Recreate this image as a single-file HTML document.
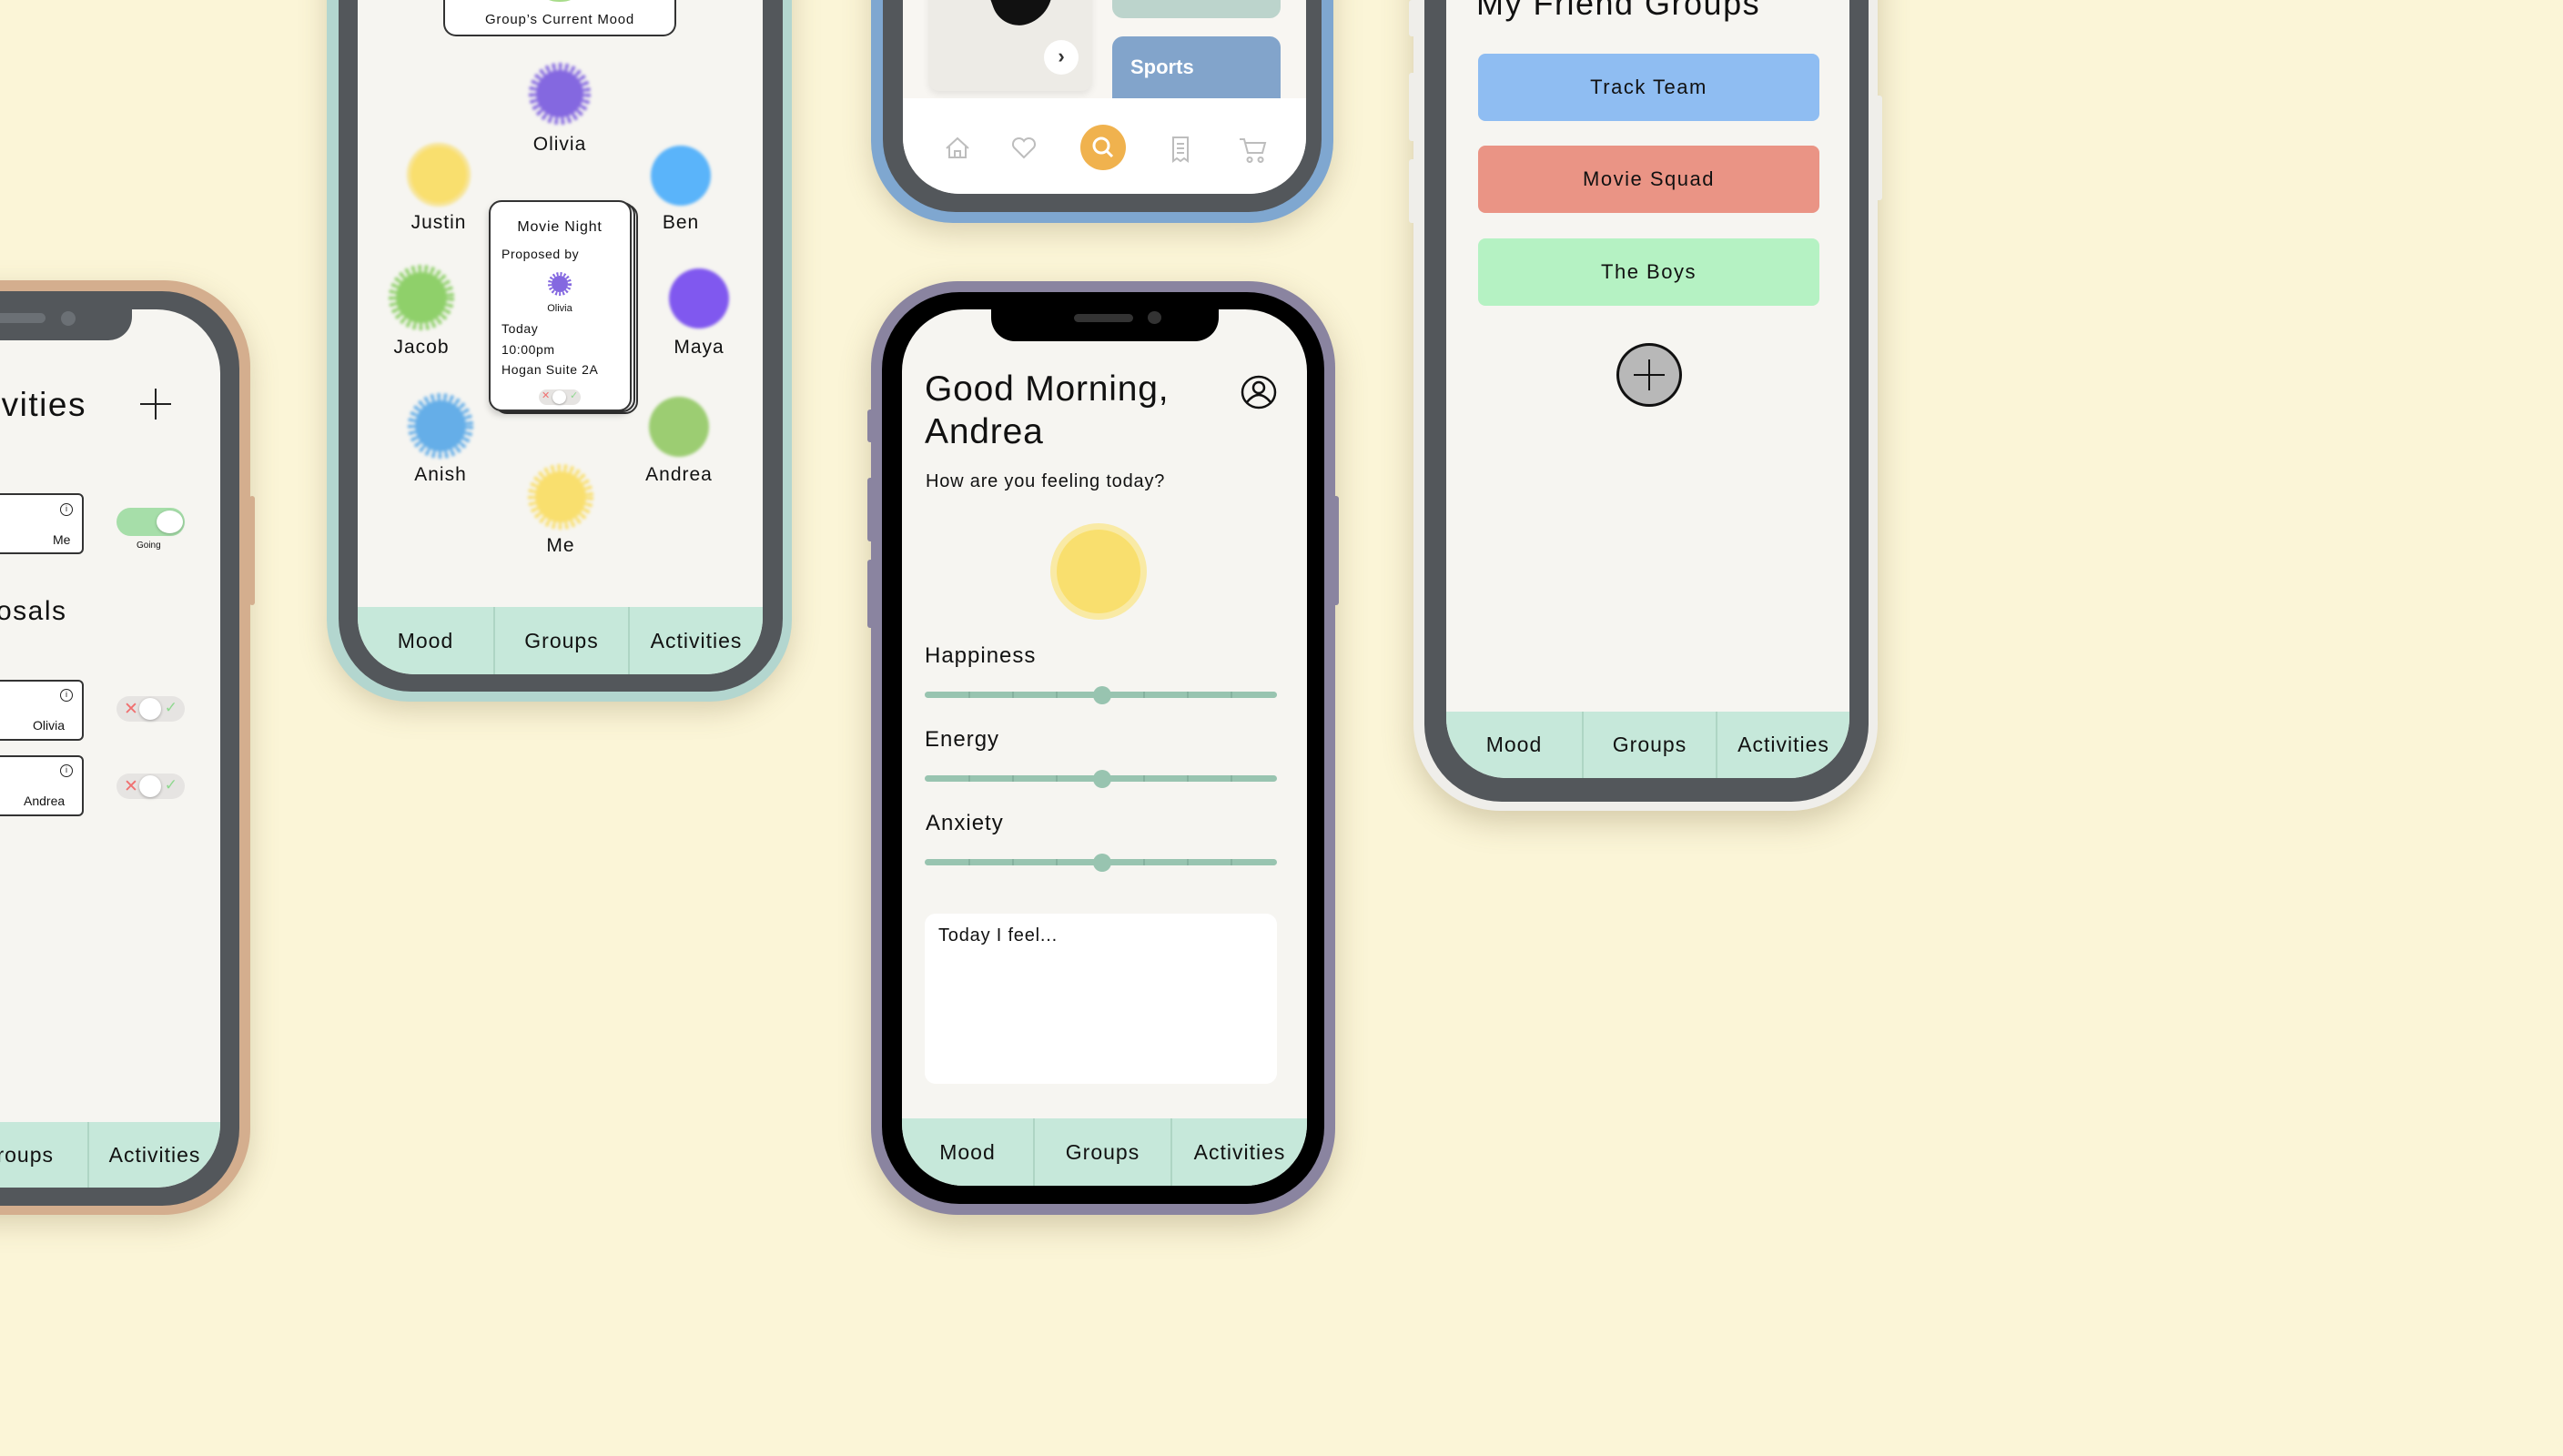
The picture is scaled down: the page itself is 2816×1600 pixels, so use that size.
<!DOCTYPE html>
<html><head><meta charset="utf-8"><style>
*{margin:0;padding:0;box-sizing:border-box}
body{width:2816px;height:1600px;overflow:hidden;background:#fbf5d7;font-family:"Liberation Sans",sans-serif;color:#111;position:relative}
.a{position:absolute}
.t{position:absolute;white-space:nowrap;line-height:1}
.tab{position:absolute;background:#c6e8da;display:flex}
.tab div{flex:1;display:flex;align-items:center;justify-content:center;border-left:2px solid #aed5c4;font-size:23px;letter-spacing:1px}
.tab div:first-child{border-left:none}
.card{position:absolute;background:#fff;border:2px solid #333;border-radius:6px}
.info{position:absolute;width:14px;height:14px;border:1.5px solid #222;border-radius:50%;font-size:9px;text-align:center;line-height:11px}
.tg{position:absolute;width:75px;height:28px;border-radius:14px;background:#e6e4e2}
.tg .k{position:absolute;left:25px;top:2px;width:24px;height:24px;border-radius:50%;background:#fff;box-shadow:0 1px 3px rgba(0,0,0,.3)}
.tg .x{position:absolute;left:8px;top:3px;color:#f07070;font-size:19px}
.tg .v{position:absolute;right:8px;top:3px;color:#8fd88f;font-size:17px}
.lbl{position:absolute;font-size:21px;letter-spacing:1px;transform:translateX(-50%)}
.sl{position:absolute;left:1016px;width:387px;height:7px;border-radius:4px;background:#98c4b0}
.sl i{position:absolute;top:0;width:2px;height:7px;background:#86b29f}
.sl b{position:absolute;left:185px;top:-6px;width:20px;height:20px;border-radius:50%;background:#98c4b0}
.btn{position:absolute;left:1624px;width:375px;height:74px;border-radius:8px;display:flex;align-items:center;justify-content:center;font-size:22px;letter-spacing:1.5px}
</style></head><body>

<!-- Phone 1 left -->
<div class="a" style="left:-300px;top:308px;width:575px;height:1027px;border-radius:95px;background:#d4ae8e;box-shadow:0 10px 30px rgba(120,100,60,.25)"></div>
<div class="a" style="left:274px;top:545px;width:6px;height:120px;background:#d4ae8e;border-radius:3px"></div>
<div class="a" style="left:-300px;top:320px;width:563px;height:1005px;border-radius:85px;background:#53575b"></div>
<div class="a" style="left:-300px;top:340px;width:542px;height:965px;border-radius:70px;background:#f6f5f1;overflow:hidden">
  <div class="a" style="left:0;top:0;width:445px;height:34px;background:#53575b;border-radius:0 0 26px 0"></div>
  <div class="a" style="left:250px;top:4px;width:100px;height:11px;border-radius:6px;background:#6b7075"></div>
  <div class="a" style="left:367px;top:2px;width:16px;height:16px;border-radius:50%;background:#6b7075"></div>
</div>
<div class="t" style="left:-66px;top:426px;font-size:37px;letter-spacing:1.5px">Activities</div>
<div class="a" style="left:154px;top:443px;width:34px;height:2px;background:#222"></div>
<div class="a" style="left:170px;top:427px;width:2px;height:34px;background:#222"></div>
<div class="card" style="left:-20px;top:542px;width:112px;height:67px"></div>
<div class="info" style="left:66px;top:553px">i</div>
<div class="t" style="left:58px;top:586px;font-size:14px">Me</div>
<div class="a" style="left:128px;top:558px;width:75px;height:31px;border-radius:16px;background:#a6dea9"></div>
<div class="a" style="left:172px;top:561px;width:29px;height:25px;border-radius:50%;background:#fff;box-shadow:0 1px 3px rgba(0,0,0,.25)"></div>
<div class="t" style="left:150px;top:595px;font-size:10px">Going</div>
<div class="t" style="left:-4px;top:657px;font-size:30px;letter-spacing:1.5px">osals</div>
<div class="card" style="left:-20px;top:747px;width:112px;height:67px"></div>
<div class="info" style="left:66px;top:757px">i</div>
<div class="t" style="left:36px;top:790px;font-size:14px">Olivia</div>
<div class="card" style="left:-20px;top:830px;width:112px;height:67px"></div>
<div class="info" style="left:66px;top:840px">i</div>
<div class="t" style="left:26px;top:873px;font-size:14px">Andrea</div>
<div class="tg" style="left:128px;top:765px"><span class="x">✕</span><span class="k"></span><span class="v">✓</span></div>
<div class="tg" style="left:128px;top:850px"><span class="x">✕</span><span class="k"></span><span class="v">✓</span></div>
<div class="tab" style="left:-300px;top:1233px;width:542px;height:72px;border-radius:0 0 70px 70px;overflow:hidden">
  <div style="flex:0 0 246px"></div><div style="flex:0 0 150px;justify-content:flex-end;padding-right:37px;border-left:none">Groups</div><div style="flex:0 0 146px">Activities</div>
</div>

<!-- Phone 2 group mood -->
<div class="a" style="left:359px;top:-200px;width:511px;height:971px;border-radius:90px;background:#b3d6cf;box-shadow:0 10px 30px rgba(120,100,60,.25)"></div>
<div class="a" style="left:372px;top:-200px;width:488px;height:960px;border-radius:80px;background:#53575b"></div>
<div class="a" style="left:393px;top:-200px;width:445px;height:941px;border-radius:62px;background:#f6f5f1;overflow:hidden"></div>
<div class="a" style="left:487px;top:-10px;width:256px;height:50px;border:2px solid #333;border-top:none;border-radius:0 0 14px 14px;background:#fff"></div>
<div class="a" style="left:600px;top:-8px;width:30px;height:10px;border-radius:50%;background:#a8dc8a"></div>
<div class="t" style="left:615px;top:14px;font-size:15px;letter-spacing:.8px;transform:translateX(-50%)">Group’s Current Mood</div>
<svg class="a" style="left:360px;top:0" width="500" height="640">
<defs><filter id="bl"><feGaussianBlur stdDeviation="1.5"/></filter></defs>
<g filter="url(#bl)">
<circle cx="255" cy="103" r="26" fill="#8468e0"/><circle cx="255" cy="103" r="30" fill="none" stroke="#8468e0" stroke-width="8" stroke-dasharray="3.5 3.5"/>
<circle cx="122" cy="192" r="33" fill="#f9df6e"/><circle cx="122" cy="192" r="33" fill="none" stroke="#f7e59a" stroke-width="4"/>
<circle cx="388" cy="193" r="33" fill="#5ab4fa"/>
<circle cx="103" cy="327" r="28" fill="#8fd06a"/><circle cx="103" cy="327" r="32" fill="none" stroke="#8fd06a" stroke-width="8" stroke-dasharray="3.5 3.5"/>
<circle cx="408" cy="328" r="33" fill="#8059ef"/>
<circle cx="124" cy="468" r="28" fill="#65aee8"/><circle cx="124" cy="468" r="32" fill="none" stroke="#65aee8" stroke-width="8" stroke-dasharray="3.5 3.5"/>
<circle cx="386" cy="469" r="33" fill="#9ccd72"/>
<circle cx="256" cy="546" r="28" fill="#f9df6e"/><circle cx="256" cy="546" r="32" fill="none" stroke="#f9df6e" stroke-width="8" stroke-dasharray="3.5 3.5"/>
</g></svg>
<div class="lbl" style="left:615px;top:147px">Olivia</div>
<div class="lbl" style="left:482px;top:233px">Justin</div>
<div class="lbl" style="left:748px;top:233px">Ben</div>
<div class="lbl" style="left:463px;top:370px">Jacob</div>
<div class="lbl" style="left:768px;top:370px">Maya</div>
<div class="lbl" style="left:484px;top:510px">Anish</div>
<div class="lbl" style="left:746px;top:510px">Andrea</div>
<div class="lbl" style="left:616px;top:588px">Me</div>
<div class="a" style="left:543px;top:224px;width:158px;height:231px;border:2px solid #333;border-radius:14px;background:#fff"></div>
<div class="a" style="left:540px;top:222px;width:158px;height:231px;border:2px solid #333;border-radius:14px;background:#fff"></div>
<div class="a" style="left:537px;top:220px;width:157px;height:232px;border:2px solid #333;border-radius:14px;background:#fff;box-shadow:0 4px 8px rgba(0,0,0,.2)"></div>
<div class="t" style="left:615px;top:242px;font-size:16px;letter-spacing:.8px;transform:translateX(-50%)">Movie Night</div>
<div class="t" style="left:551px;top:272px;font-size:14px;letter-spacing:.6px">Proposed by</div>
<svg class="a" style="left:601px;top:298px" width="28" height="28"><circle cx="14" cy="14" r="9" fill="#8468e0"/><circle cx="14" cy="14" r="11" fill="none" stroke="#8468e0" stroke-width="4" stroke-dasharray="2 2"/></svg>
<div class="t" style="left:615px;top:334px;font-size:11px;transform:translateX(-50%)">Olivia</div>
<div class="t" style="left:551px;top:354px;font-size:14px;letter-spacing:.6px">Today</div>
<div class="t" style="left:551px;top:377px;font-size:14px;letter-spacing:.6px">10:00pm</div>
<div class="t" style="left:551px;top:399px;font-size:14px;letter-spacing:.6px">Hogan Suite 2A</div>
<div class="a" style="left:592px;top:428px;width:46px;height:17px;border-radius:9px;background:#e6e4e2"></div>
<div class="a" style="left:607px;top:429px;width:15px;height:15px;border-radius:50%;background:#fff;box-shadow:0 1px 2px rgba(0,0,0,.3)"></div>
<div class="t" style="left:595px;top:430px;font-size:11px;color:#f07070">✕</div>
<div class="t" style="left:626px;top:430px;font-size:11px;color:#8fd88f">✓</div>
<div class="tab" style="left:393px;top:667px;width:445px;height:74px;border-radius:0 0 62px 62px;overflow:hidden">
  <div style="flex:0 0 149px">Mood</div><div style="flex:0 0 148px">Groups</div><div>Activities</div>
</div>

<!-- Phone 3 store -->
<div class="a" style="left:957px;top:-300px;width:508px;height:545px;border-radius:90px;background:#7fa7d0;box-shadow:0 10px 30px rgba(120,100,60,.25)"></div>
<div class="a" style="left:970px;top:-300px;width:482px;height:533px;border-radius:80px;background:#53575b"></div>
<div class="a" style="left:992px;top:-300px;width:443px;height:513px;border-radius:62px;background:#f8f6f2;overflow:hidden">
  <div class="a" style="left:28px;top:0;width:180px;height:400px;background:#edebe6;border-radius:12px;box-shadow:0 4px 8px rgba(0,0,0,.08)"></div>
  <div class="a" style="left:98px;top:270px;width:70px;height:56px;background:#111;border-radius:0 0 40px 30px;transform:rotate(-20deg)"></div>
  <div class="a" style="left:155px;top:344px;width:38px;height:38px;border-radius:50%;background:#fff;text-align:center;font-size:22px;line-height:36px;font-weight:bold;color:#333">›</div>
  <div class="a" style="left:230px;top:0;width:185px;height:320px;background:#bcd4cc;border-radius:12px"></div>
  <div class="a" style="left:230px;top:340px;width:185px;height:80px;background:#82a4cb;border-radius:12px 12px 0 0"></div>
  <div class="t" style="left:250px;top:363px;font-size:22px;color:#fff;font-weight:bold">Sports</div>
  <div class="a" style="left:0;top:408px;width:443px;height:105px;background:#fff"></div>
</div>
<svg class="a" style="left:1030px;top:135px" width="370" height="60" fill="none" stroke="#bdbdbd" stroke-width="2">
<path d="M10 28 L22 17 L34 28 M13 26 V38 H31 V26 M19 38 V31 H25 V38"/>
<path d="M95 38 L84 27 A6 6 0 0 1 95 20 A6 6 0 0 1 106 27 Z"/>
<path d="M259 16 H275 V42 L271 39 L267 42 L263 39 L259 42 Z M263 23 H271 M263 28 H271 M263 33 H271"/>
<path d="M332 18 H337 L341 33 H357 L360 22 H338 M343 38 A2.5 2.5 0 1 0 343.1 38 M355 38 A2.5 2.5 0 1 0 355.1 38"/>
<circle cx="182" cy="27" r="25" fill="#f0b24e" stroke="none"/>
<circle cx="180" cy="25" r="8" stroke="#fff" stroke-width="3"/><path d="M186 31 L192 37" stroke="#fff" stroke-width="3"/>
</svg>

<!-- Phone center mood -->
<div class="a" style="left:957px;top:309px;width:510px;height:1026px;border-radius:95px;background:#8a84a0;box-shadow:0 12px 34px rgba(120,100,60,.3)"></div>
<div class="a" style="left:953px;top:450px;width:8px;height:36px;background:#8a84a0;border-radius:3px"></div>
<div class="a" style="left:953px;top:525px;width:8px;height:70px;background:#8a84a0;border-radius:3px"></div>
<div class="a" style="left:953px;top:615px;width:8px;height:75px;background:#8a84a0;border-radius:3px"></div>
<div class="a" style="left:1463px;top:545px;width:8px;height:120px;background:#8a84a0;border-radius:3px"></div>
<div class="a" style="left:969px;top:321px;width:486px;height:1002px;border-radius:85px;background:#000"></div>
<div class="a" style="left:991px;top:340px;width:445px;height:963px;border-radius:68px;background:#f6f5f1;overflow:hidden">
  <div class="a" style="left:98px;top:-5px;width:250px;height:40px;background:#000;border-radius:0 0 26px 26px"></div>
  <div class="a" style="left:189px;top:5px;width:65px;height:9px;border-radius:5px;background:#333"></div>
  <div class="a" style="left:270px;top:2px;width:15px;height:14px;border-radius:50%;background:#333"></div>
</div>
<div class="t" style="left:1016px;top:408px;font-size:39px;letter-spacing:.8px">Good Morning,</div>
<div class="t" style="left:1016px;top:455px;font-size:39px;letter-spacing:.8px">Andrea</div>
<svg class="a" style="left:1363px;top:412px" width="40" height="38" fill="none" stroke="#111" stroke-width="2.5"><ellipse cx="20" cy="19" rx="18" ry="17"/><circle cx="20" cy="14" r="6"/><path d="M7 30 Q20 14 33 30"/></svg>
<div class="t" style="left:1017px;top:519px;font-size:20px;letter-spacing:.8px">How are you feeling today?</div>
<div class="a" style="left:1154px;top:575px;width:106px;height:106px;border-radius:50%;background:#f9eaa5"></div>
<div class="a" style="left:1161px;top:582px;width:92px;height:92px;border-radius:50%;background:#f9df6e"></div>
<div class="t" style="left:1016px;top:709px;font-size:24px;letter-spacing:1px">Happiness</div>
<div class="sl" style="top:760px"><i style="left:48px"></i><i style="left:96px"></i><i style="left:144px"></i><i style="left:240px"></i><i style="left:288px"></i><i style="left:336px"></i><b></b></div>
<div class="t" style="left:1016px;top:801px;font-size:24px;letter-spacing:1px">Energy</div>
<div class="sl" style="top:852px"><i style="left:48px"></i><i style="left:96px"></i><i style="left:144px"></i><i style="left:240px"></i><i style="left:288px"></i><i style="left:336px"></i><b></b></div>
<div class="t" style="left:1017px;top:893px;font-size:24px;letter-spacing:1px">Anxiety</div>
<div class="sl" style="top:944px"><i style="left:48px"></i><i style="left:96px"></i><i style="left:144px"></i><i style="left:240px"></i><i style="left:288px"></i><i style="left:336px"></i><b></b></div>
<div class="a" style="left:1016px;top:1004px;width:387px;height:187px;border-radius:12px;background:#fff"></div>
<div class="t" style="left:1031px;top:1018px;font-size:20px;letter-spacing:.8px">Today I feel...</div>
<div class="tab" style="left:991px;top:1229px;width:445px;height:74px;border-radius:0 0 68px 68px;overflow:hidden">
  <div style="flex:0 0 144px">Mood</div><div style="flex:0 0 151px">Groups</div><div>Activities</div>
</div>

<!-- Phone 4 groups -->
<div class="a" style="left:1553px;top:-200px;width:510px;height:1091px;border-radius:95px;background:#efeeea;box-shadow:0 12px 34px rgba(120,100,60,.3)"></div>
<div class="a" style="left:1548px;top:0;width:8px;height:40px;background:#efeeea;border-radius:3px"></div>
<div class="a" style="left:1548px;top:80px;width:8px;height:75px;background:#efeeea;border-radius:3px"></div>
<div class="a" style="left:1548px;top:175px;width:8px;height:70px;background:#efeeea;border-radius:3px"></div>
<div class="a" style="left:2060px;top:105px;width:8px;height:115px;background:#efeeea;border-radius:3px"></div>
<div class="a" style="left:1565px;top:-200px;width:488px;height:1081px;border-radius:85px;background:#53575b"></div>
<div class="a" style="left:1589px;top:-200px;width:443px;height:1055px;border-radius:66px;background:#f6f5f1"></div>
<div class="t" style="left:1622px;top:-14px;font-size:36px;letter-spacing:1.5px">My Friend Groups</div>
<div class="btn" style="top:59px;background:#8fbdf2">Track Team</div>
<div class="btn" style="top:160px;background:#ea9485">Movie Squad</div>
<div class="btn" style="top:262px;background:#b5f2c3">The Boys</div>
<div class="a" style="left:1776px;top:377px;width:72px;height:70px;border-radius:50%;background:#b8b8b8;border:3px solid #111"></div>
<div class="a" style="left:1795px;top:411px;width:34px;height:2px;background:#111"></div>
<div class="a" style="left:1811px;top:395px;width:2px;height:34px;background:#111"></div>
<div class="tab" style="left:1589px;top:782px;width:443px;height:73px;border-radius:0 0 66px 66px;overflow:hidden">
  <div style="flex:0 0 149px">Mood</div><div style="flex:0 0 147px">Groups</div><div>Activities</div>
</div>
</body></html>
